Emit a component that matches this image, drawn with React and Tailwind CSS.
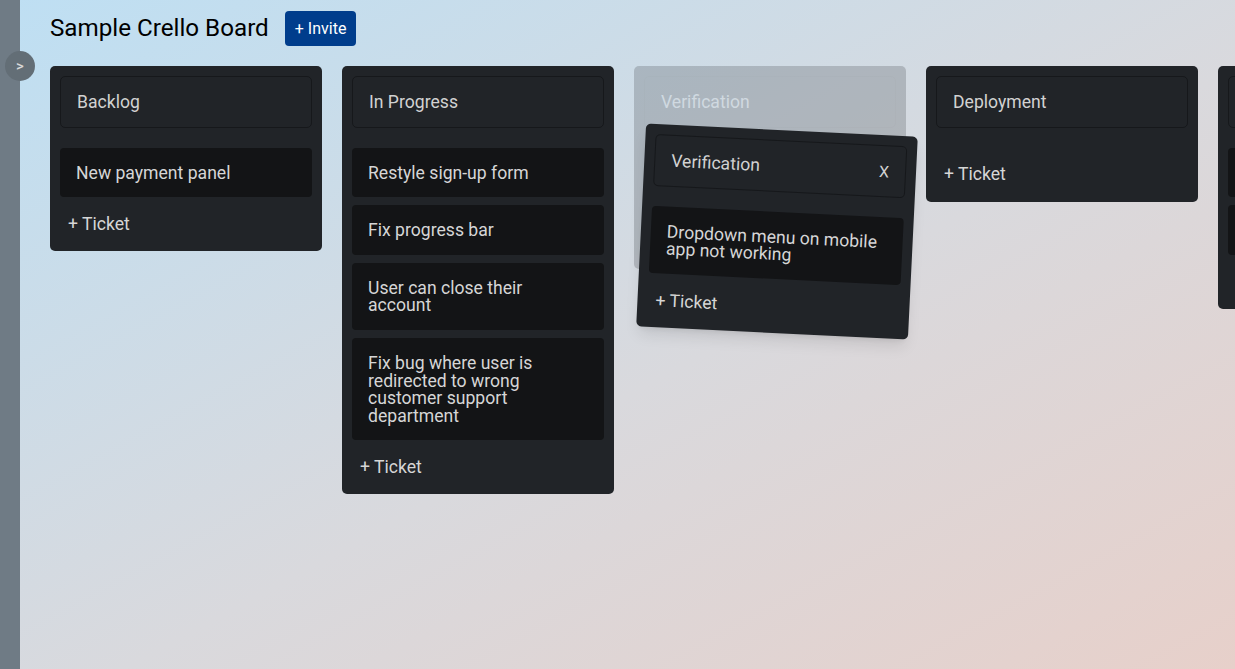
import { useState } from 'react';

const blank = '\u00a0';

const columns = [
  { id: 'backlog', title: 'Backlog', tickets: ['New payment panel'] },
  {
    id: 'progress',
    title: 'In Progress',
    tickets: [
      'Restyle sign-up form',
      'Fix progress bar',
      'User can close their account',
      'Fix bug where user is redirected to wrong customer support department',
    ],
  },
  { id: 'verification', title: 'Verification', tickets: ['Dropdown menu on mobile app not working'], dragging: true },
  { id: 'deployment', title: 'Deployment', tickets: [] },
  // runs off the right edge, only its frame shows
  { id: 'offscreen', title: blank, tickets: [blank, blank], clipped: true },
];

function Column({ column, ghost, lifted }) {
  return (
    <div
      className={
        'w-[272px] shrink-0 rounded-[5px] bg-[#212428] px-[10px] pt-[10px] pb-[2px] ' +
        (ghost ? 'opacity-20' : '') +
        (lifted ? ' shadow-lg' : '')
      }
    >
      <div className="flex items-center justify-between rounded-[5px] border border-[#16181b] px-4 pt-[17px] pb-[15px] text-[17.6px] leading-none text-[#d2d2d2]">
        <span>{column.title}</span>
        {lifted && <span className="text-[16px] text-[#d2d2d2]">X</span>}
      </div>
      <div className="mt-5 flex flex-col gap-2">
        {column.tickets.map((t, i) => (
          <div
            key={i}
            className={
              'rounded-[4px] bg-[#131416] px-4 pt-[17px] pb-[15px] text-[17.6px] leading-none text-[#d6d6d6] ' +
              (ghost ? 'invisible' : '')
            }
          >
            {t}
          </div>
        ))}
      </div>
      <div className={'flex h-[52px] items-center px-2 pt-[2px] text-[17.6px] text-[#d6d6d6] ' + (ghost || column.clipped ? 'invisible' : '')}>
        + Ticket
      </div>
    </div>
  );
}

export default function App() {
  const [open, setOpen] = useState(false);
  const dragged = columns.find(c => c.dragging);

  return (
    <div
      className="relative flex h-[669px] w-full overflow-hidden bg-[linear-gradient(to_bottom_right,#bedff3,#d9d9dd_55%,#e7d0ca)]"
      style={{ fontFamily: 'Roboto, "Liberation Sans", sans-serif' }}
    >
      {/* sidebar */}
      <div className="h-full w-5 shrink-0 bg-[#6f7b85]" />
      <button
        onClick={() => setOpen(!open)}
        className="absolute left-[5px] top-[51px] flex h-[30px] w-[30px] items-center justify-center rounded-full bg-[#636e76] text-[15px] font-medium text-[#d8d8d8]"
      >
        {'>'}
      </button>

      <div className="relative flex-1 pl-[30px]">
        <div className="mt-[11px] flex items-center gap-4">
          <h1 className="text-[24.2px] leading-none text-black">Sample Crello Board</h1>
          <button className="h-[35px] rounded-[4px] bg-[#003d8c] px-[10px] text-[16px] text-white">+ Invite</button>
        </div>

        <div className="mt-5 flex items-start gap-5">
          {columns.map(c => (
            <Column key={c.id} column={c} ghost={c.dragging} />
          ))}
        </div>

        {/* column being dragged */}
        <div className="absolute left-[621px] top-[130px] rotate-[2.8deg]">
          <Column column={dragged} lifted />
        </div>
      </div>
    </div>
  );
}
